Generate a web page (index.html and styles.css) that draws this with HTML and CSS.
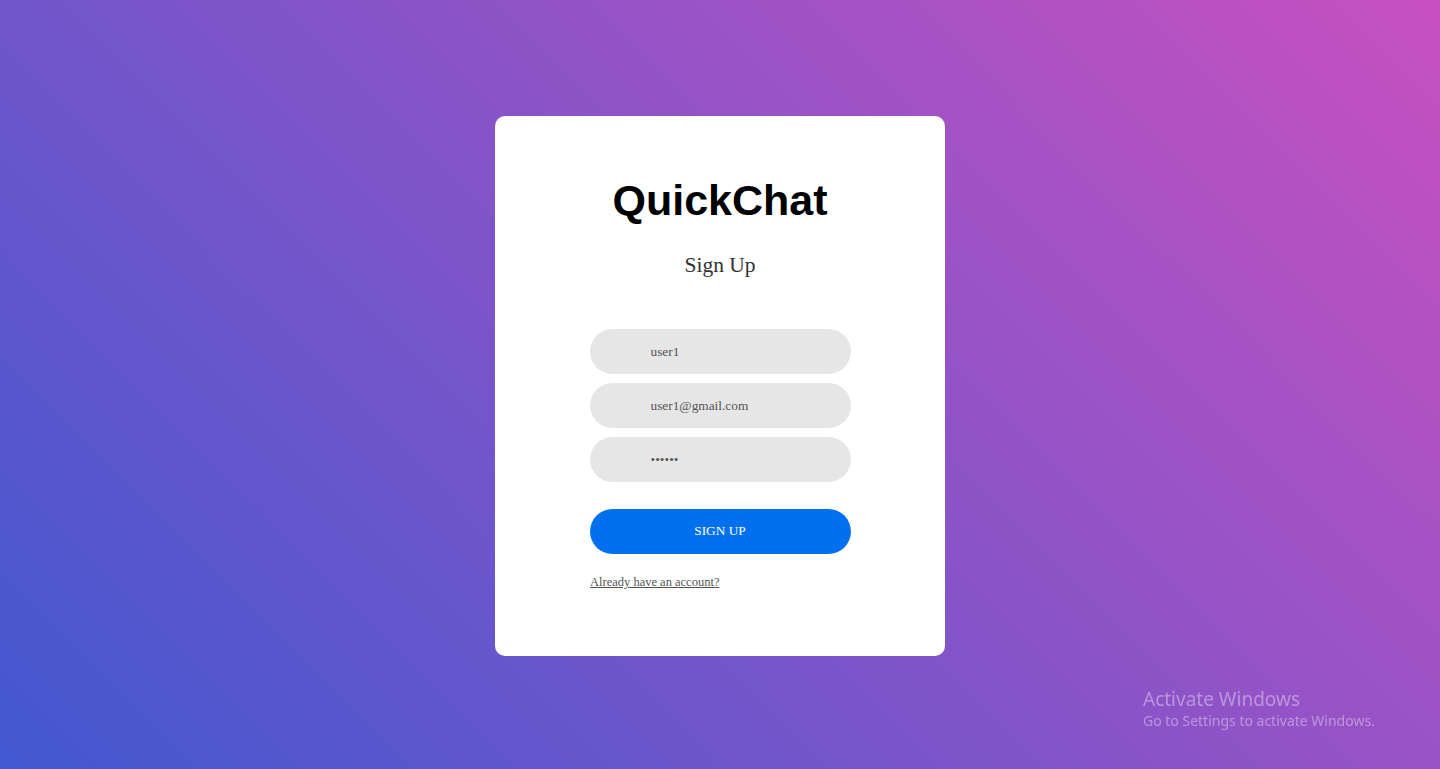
FILE: index.html
```html
<!DOCTYPE html>
<html lang="en">
<head>
<meta charset="utf-8">
<title>QuickChat - Sign Up</title>
<link rel="stylesheet" href="styles.css">
</head>
<body>
<main class="page">
  <section class="card">
    <h1 class="brand">QuickChat</h1>
    <h2 class="subtitle">Sign Up</h2>
    <form class="form">
      <input class="field" type="text" value="user1">
      <input class="field" type="email" value="user1@gmail.com">
      <input class="field" type="password" value="123456">
      <button class="submit" type="button">SIGN UP</button>
    </form>
    <a class="alt-link" href="#">Already have an account?</a>
  </section>
</main>
<div class="watermark">
  <div class="wm-title">Activate Windows</div>
  <div class="wm-sub">Go to Settings to activate Windows.</div>
</div>
</body>
</html>
```
FILE: styles.css
```css
html, body {
  margin: 0;
  padding: 0;
  height: 100%;
}
body {
  background: linear-gradient(45deg, #4158d0 0%, #c850c0 100%);
  font-family: "Liberation Serif", "Times New Roman", serif;
  overflow: hidden;
}
.page {
  min-height: 100vh;
  box-sizing: border-box;
  padding-top: 3px;
  display: flex;
  align-items: center;
  justify-content: center;
}
.card {
  width: 450px;
  height: 540px;
  box-sizing: border-box;
  background: #fff;
  border-radius: 10px;
  padding-top: 60px;
  display: flex;
  flex-direction: column;
  align-items: center;
}
.brand {
  margin: 0;
  font-family: "Liberation Sans", Arial, sans-serif;
  font-weight: bold;
  font-size: 43px;
  line-height: 49px;
  color: #000;
}
.subtitle {
  margin: 28px 0 0;
  font-weight: normal;
  font-size: 21.5px;
  line-height: 25px;
  color: #333;
}
.form {
  margin-top: 51px;
  width: 58%;
  display: flex;
  flex-direction: column;
  gap: 9px;
}
.field {
  height: 45px;
  box-sizing: border-box;
  border: none;
  outline: none;
  border-radius: 23px;
  background: #e6e6e6;
  padding: 0 20px 0 61px;
  font-family: "Liberation Serif", "Times New Roman", serif;
  font-size: 13.33px;
  color: #555;
}
.submit {
  margin-top: 18px;
  height: 45px;
  border: none;
  border-radius: 23px;
  background: #0070ee;
  color: #fff;
  font-family: "Liberation Serif", "Times New Roman", serif;
  font-size: 13.33px;
  line-height: 43px;
  padding: 0 0 2px;
  cursor: pointer;
}
.alt-link {
  align-self: flex-start;
  margin: 21px 0 0 95px;
  font-size: 12.5px;
  line-height: 15px;
  color: #555;
}
.watermark {
  position: fixed;
  left: 1143px;
  top: 687px;
  font-family: "Noto Sans", "Open Sans", sans-serif;
  color: rgba(255, 255, 255, 0.38);
}
.wm-title {
  font-size: 19px;
  line-height: 24px;
}
.wm-sub {
  font-size: 14px;
  line-height: 20px;
}
```
